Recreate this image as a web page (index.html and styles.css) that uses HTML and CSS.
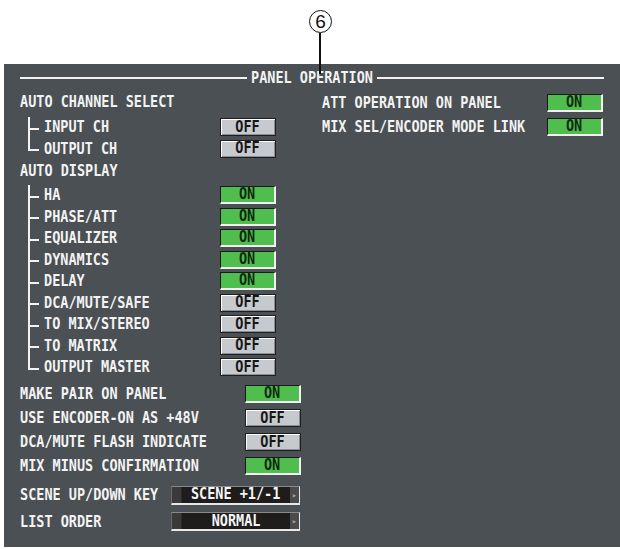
FILE: index.html
```html
<!DOCTYPE html>
<html>
<head>
<meta charset="utf-8">
<link rel="stylesheet" href="styles.css">
</head>
<body>
<div class="page">
  <div class="callout"><span class="callout-num">6</span></div>
  <div class="callout-line"></div>
  <section class="panel">
    <div class="title"><span class="title-text">PANEL OPERATION</span></div>
    <div class="cols">
      <div class="col-left">
        <div class="head"><span class="txt">AUTO CHANNEL SELECT</span></div>
        <ul class="tree tree-1">
          <li class="row"><span class="label label-tree"><span class="txt">INPUT CH</span></span><span class="btn off"><span class="txt-btn">OFF</span></span></li>
          <li class="row"><span class="label label-tree"><span class="txt">OUTPUT CH</span></span><span class="btn off"><span class="txt-btn">OFF</span></span></li>
        </ul>
        <div class="head head-2"><span class="txt">AUTO DISPLAY</span></div>
        <ul class="tree tree-2">
          <li class="row"><span class="label label-tree"><span class="txt">HA</span></span><span class="btn on"><span class="txt-btn">ON</span></span></li>
          <li class="row"><span class="label label-tree"><span class="txt">PHASE/ATT</span></span><span class="btn on"><span class="txt-btn">ON</span></span></li>
          <li class="row"><span class="label label-tree"><span class="txt">EQUALIZER</span></span><span class="btn on"><span class="txt-btn">ON</span></span></li>
          <li class="row"><span class="label label-tree"><span class="txt">DYNAMICS</span></span><span class="btn on"><span class="txt-btn">ON</span></span></li>
          <li class="row"><span class="label label-tree"><span class="txt">DELAY</span></span><span class="btn on"><span class="txt-btn">ON</span></span></li>
          <li class="row"><span class="label label-tree"><span class="txt">DCA/MUTE/SAFE</span></span><span class="btn off"><span class="txt-btn">OFF</span></span></li>
          <li class="row"><span class="label label-tree"><span class="txt">TO MIX/STEREO</span></span><span class="btn off"><span class="txt-btn">OFF</span></span></li>
          <li class="row"><span class="label label-tree"><span class="txt">TO MATRIX</span></span><span class="btn off"><span class="txt-btn">OFF</span></span></li>
          <li class="row"><span class="label label-tree"><span class="txt">OUTPUT MASTER</span></span><span class="btn off"><span class="txt-btn">OFF</span></span></li>
        </ul>
        <div class="opts">
          <div class="row opt"><span class="label label-opt"><span class="txt">MAKE PAIR ON PANEL</span></span><span class="btn on"><span class="txt-btn">ON</span></span></div>
          <div class="row opt"><span class="label label-opt"><span class="txt">USE ENCODER-ON AS +48V</span></span><span class="btn off"><span class="txt-btn">OFF</span></span></div>
          <div class="row opt"><span class="label label-opt"><span class="txt">DCA/MUTE FLASH INDICATE</span></span><span class="btn off"><span class="txt-btn">OFF</span></span></div>
          <div class="row opt"><span class="label label-opt"><span class="txt">MIX MINUS CONFIRMATION</span></span><span class="btn on"><span class="txt-btn">ON</span></span></div>
        </div>
        <div class="selects">
          <div class="row sel">
            <span class="label label-sel"><span class="txt">SCENE UP/DOWN KEY</span></span>
            <div class="dropdown"><span class="dd-l"></span><span class="dd-v"><span class="txt-btn">SCENE +1/-1</span></span><span class="dd-r">&#9656;</span></div>
          </div>
          <div class="row sel">
            <span class="label label-sel"><span class="txt">LIST ORDER</span></span>
            <div class="dropdown"><span class="dd-l"></span><span class="dd-v"><span class="txt-btn">NORMAL</span></span><span class="dd-r">&#9656;</span></div>
          </div>
        </div>
      </div>
      <div class="col-right">
        <div class="row opt"><span class="label label-right"><span class="txt">ATT OPERATION ON PANEL</span></span><span class="btn on"><span class="txt-btn">ON</span></span></div>
        <div class="row opt"><span class="label label-right"><span class="txt">MIX SEL/ENCODER MODE LINK</span></span><span class="btn on"><span class="txt-btn">ON</span></span></div>
      </div>
    </div>
  </section>
</div>
</body>
</html>
```

FILE: styles.css
```css
html, body {
  margin: 0;
  padding: 0;
  background: #ffffff;
}

.page {
  position: relative;
  width: 620px;
  height: 549px;
  padding: 64px 0 0 4px;
  box-sizing: border-box;
  font-family: "DejaVu Sans Mono", "Liberation Mono", monospace;
  font-weight: bold;
}

.callout {
  position: absolute;
  left: 309px;
  top: 10px;
  width: 23px;
  height: 23px;
  box-sizing: border-box;
  border: 1px solid #111;
  border-radius: 50%;
  display: flex;
  align-items: center;
  justify-content: center;
  background: #fff;
}

.callout-num {
  font-family: "Liberation Sans", Arial, sans-serif;
  font-weight: normal;
  font-size: 19px;
  line-height: 1;
  color: #111;
}

.callout-line {
  position: absolute;
  left: 319px;
  top: 33px;
  width: 2px;
  height: 41px;
  background: #111;
  z-index: 2;
}

.panel {
  width: 616px;
  height: 483px;
  box-sizing: border-box;
  padding: 0 16px;
  background: #4a5053;
  color: #f3f3f3;
  font-size: 15px;
}

.txt {
  display: inline-block;
  transform: scaleX(0.9);
  transform-origin: left center;
}

.txt-btn {
  display: inline-block;
  transform: scaleX(0.9);
  transform-origin: center center;
}

.title {
  height: 28px;
  display: flex;
  align-items: center;
  gap: 4px;
}

.title::before,
.title::after {
  content: "";
  flex: 1;
  height: 2px;
  background: #f3f3f3;
}

.title-text {
  line-height: 1;
  display: inline-block;
  width: 136px;
  text-align: center;
  white-space: nowrap;
  transform: scaleX(0.9);
  transform-origin: center center;
  margin: 0 -7px;
}

.cols {
  display: flex;
}

.col-left {
  width: 280px;
  flex: none;
}

.col-right {
  flex: 1;
  padding-left: 22px;
  display: flex;
  flex-direction: column;
  margin-top: -1px;
}

.head {
  height: 21px;
  line-height: 21px;
  white-space: nowrap;
}

.head-2 {
  margin-top: 1px;
}

.tree {
  list-style: none;
  margin: 0;
  padding: 0;
}

.tree-1 {
  margin-top: 3.5px;
}

.tree-2 {
  margin-top: 3px;
}

.row {
  display: flex;
  align-items: center;
  white-space: nowrap;
}

.tree .row {
  position: relative;
  height: 21.5px;
  padding-left: 24px;
}

.tree .row::before {
  content: "";
  position: absolute;
  left: 8px;
  top: 0;
  width: 9px;
  height: 11px;
  border-left: 2px solid #f3f3f3;
  border-bottom: 2px solid #f3f3f3;
}

.tree .row:not(:last-child)::after {
  content: "";
  position: absolute;
  left: 8px;
  top: 0;
  bottom: 0;
  border-left: 2px solid #f3f3f3;
}

.label {
  flex: none;
  overflow: visible;
}

.label-tree {
  width: 176px;
}

.opts {
  margin-top: 4px;
}

.opt {
  height: 24px;
}

.label-opt {
  width: 225px;
}

.label-right {
  width: 225px;
}

.selects {
  margin-top: 4px;
}

.sel {
  height: 26.5px;
}

.label-sel {
  width: 151px;
}

.btn {
  flex: none;
  width: 56px;
  height: 18px;
  box-sizing: border-box;
  display: flex;
  align-items: center;
  justify-content: center;
  font-size: 15px;
  line-height: 1;
}

.off {
  background: #c6cacf;
  color: #161616;
  border: 1px solid #1e1e1e;
  box-shadow: inset 1px 1px 0 #ffffff, inset -1px -1px 0 #8c9096;
}

.on {
  background: #4fbe4f;
  color: #0e2a0e;
  border-style: solid;
  border-width: 1px 2px 2px 1px;
  border-color: #1a1a1a #f2f2f2 #f2f2f2 #1a1a1a;
}

.dropdown {
  flex: none;
  width: 129px;
  height: 19px;
  box-sizing: border-box;
  display: flex;
  background: #1f1c1c;
  border-style: solid;
  border-width: 1px 1px 2px 1px;
  border-color: #8a8a8a #e8e8e8 #e8e8e8 #6a6a6a;
}

.dd-l {
  width: 9px;
  background: #3a3a3a;
  border-right: 1px solid #2a2a2a;
}

.dd-v {
  flex: 1;
  display: flex;
  align-items: center;
  justify-content: center;
  color: #f5f5f5;
  font-size: 15px;
  line-height: 1;
}

.dd-r {
  width: 9px;
  background: #4a4a4a;
  color: #9a9a9a;
  font-size: 9px;
  display: flex;
  align-items: center;
  justify-content: center;
}
```
